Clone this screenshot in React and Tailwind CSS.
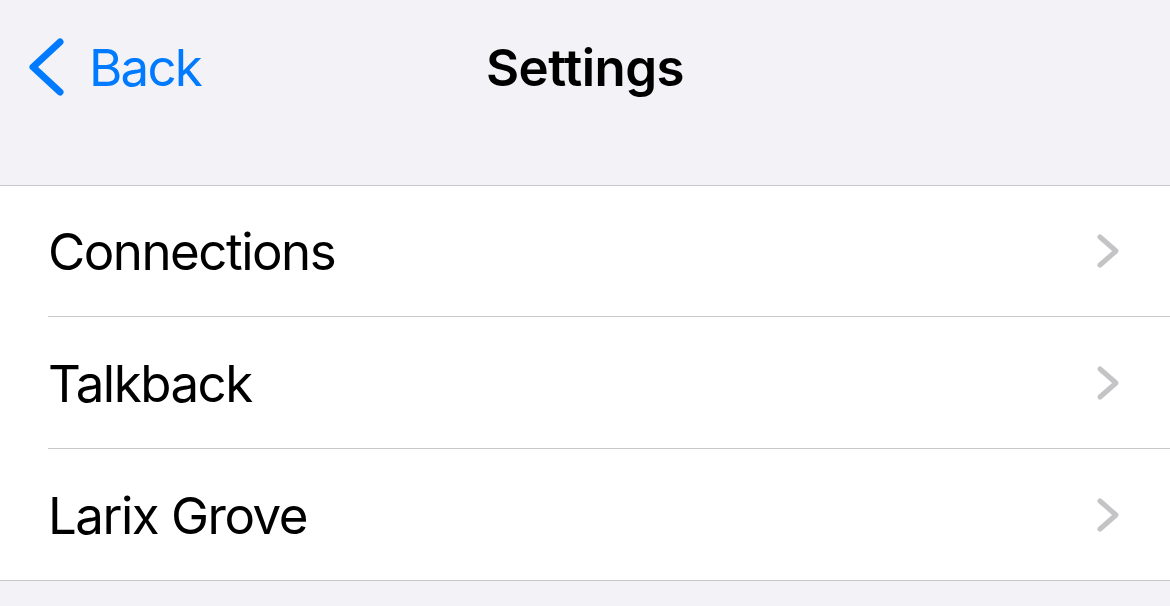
import React from 'react';

const rows = [
  { label: 'Connections', h: 'h-[131px]' },
  { label: 'Talkback', h: 'h-[132px]' },
  { label: 'Larix Grove', h: 'h-[131px]' },
];

const Chevron = () => (
  <svg width="26" height="36" viewBox="0 0 26 36" fill="none">
    <path d="M4 4 L20 18 L4 32" stroke="#c4c4c7" strokeWidth="5" strokeLinecap="round" strokeLinejoin="round" />
  </svg>
);

const App = () => {
  return (
    <div className="w-[1170px] h-[606px] bg-[#f2f2f7] overflow-hidden" style={{ fontFamily: 'Inter, "Liberation Sans", sans-serif' }}>
      <div className="relative h-[185px]">
        <div className="h-[134px] flex items-center relative">
          <button className="flex items-center gap-[24px] pl-[27px] text-[#007aff] text-[51px] leading-none">
            <svg width="38" height="58" viewBox="0 0 38 58" fill="none">
              <path d="M33 4 L6 29 L33 54" stroke="#007aff" strokeWidth="7" strokeLinecap="round" strokeLinejoin="round" />
            </svg>
            <span className="tracking-[-1.8px]">Back</span>
          </button>
          <h1 className="absolute left-0 right-0 text-center text-[51px] font-semibold text-black leading-none tracking-[-0.5px] pointer-events-none">
            Settings
          </h1>
        </div>
      </div>
      <div className="bg-white border-y border-[#c8c7cc]">
        {rows.map((r, i) => (
          <div key={r.label} className="pl-[48px]">
            <div className={`flex items-center justify-between ${r.h} pr-[48px] ${i < rows.length - 1 ? 'border-b border-[#c8c7cc]' : ''}`}>
              <span className="pt-[3px] text-[51px] text-black tracking-[-1.5px]">{r.label}</span>
              <Chevron />
            </div>
          </div>
        ))}
      </div>
    </div>
  );
};

export default App;
